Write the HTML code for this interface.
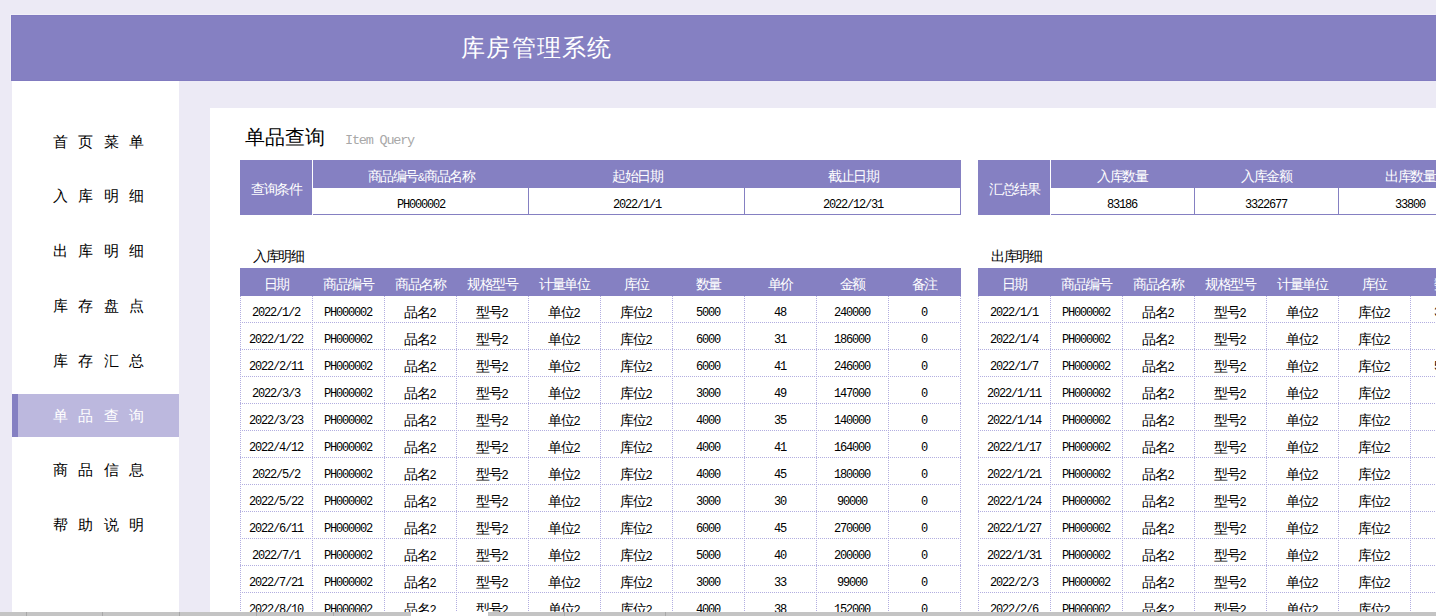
<!DOCTYPE html><html><head><meta charset="utf-8"><style>
*{margin:0;padding:0;box-sizing:border-box}
html,body{width:1436px;height:616px;overflow:hidden;background:#ecEAf5;font-family:"Liberation Sans",sans-serif;color:#000;position:relative}
.a{position:absolute}
.hdr{left:11px;top:15px;width:1425px;height:66px;background:#8580c2;border:1px solid #817bc0;border-right:0;box-shadow:-1px -1px 0 #f1f0f8}
.ttl{left:461px;top:35px;font-size:24px;line-height:26px;color:#fff;letter-spacing:1.3px;white-space:nowrap}
.side{left:12px;top:81px;width:167px;height:531px;background:#fff}
.mi{left:12px;width:167px;height:43px;font-size:15px;line-height:43px;letter-spacing:10.3px;padding-left:41px;white-space:nowrap}
.mi.on{background:#bcb8de;color:#fff}
.mi.on:before{content:"";position:absolute;left:0;top:0;width:6px;height:43px;background:#8580c2}
.main{left:210px;top:108px;width:1226px;height:504px;background:#fff}
.h1{left:245px;top:125px;font-size:19.5px;line-height:24px;white-space:nowrap}
.eng{left:345px;top:133px;font-family:"Liberation Mono",monospace;font-size:13.5px;letter-spacing:-1.2px;line-height:16px;color:#a8a8a8;white-space:nowrap}
.pc{background:#8580c2;color:#fff;font-size:12px;text-align:center;white-space:nowrap}
.t12{font-size:12px;white-space:nowrap;text-align:center}
.num{}
.c{font-size:13.5px;letter-spacing:-1.5px}
.n{font-family:"Liberation Mono",monospace;font-size:12px;letter-spacing:-1.2px}
.amp{font-size:11px;letter-spacing:-0.8px}
.hl{height:1px;background:repeating-linear-gradient(to right,#b2aee0 0 1px,transparent 1px 2px)}
.vl{width:1px;background:repeating-linear-gradient(to bottom,#b2aee0 0 1px,transparent 1px 2px)}
.sl{background:#8580c2}
.bar{left:0;top:612px;width:1436px;height:4px;background:#c4c4c4}
.bsep{top:612px;width:1px;height:4px;background:#a8a8a8}
</style></head><body>
<div class="a hdr"></div>
<div class="a ttl">库房管理系统</div>
<div class="a side"></div>
<div class="a mi" style="top:120px">首页菜单</div>
<div class="a mi" style="top:174px">入库明细</div>
<div class="a mi" style="top:229px">出库明细</div>
<div class="a mi" style="top:284px">库存盘点</div>
<div class="a mi" style="top:339px">库存汇总</div>
<div class="a mi on" style="top:394px">单品查询</div>
<div class="a mi" style="top:448px">商品信息</div>
<div class="a mi" style="top:503px">帮助说明</div>
<div class="a main"></div>
<div class="a h1">单品查询</div>
<div class="a eng">Item Query</div>
<div class="a pc" style="left:240px;top:160px;width:72px;height:55px;line-height:60px"><span class="c">查询条件</span></div>
<div class="a pc" style="left:313px;top:160px;width:648px;height:28px"></div>
<div class="a t12" style="left:313px;top:162px;width:216px;height:30px;line-height:30px;color:#fff"><span class="c">商品编号</span><span class="amp">&amp;</span><span class="c">商品名称</span></div>
<div class="a t12 num" style="left:313px;top:190px;width:216px;height:28px;line-height:28px;"><span class="n">PH000002</span></div>
<div class="a t12" style="left:529px;top:162px;width:216px;height:30px;line-height:30px;color:#fff"><span class="c">起始日期</span></div>
<div class="a t12 num" style="left:529px;top:190px;width:216px;height:28px;line-height:28px;"><span class="n">2022/1/1</span></div>
<div class="a t12" style="left:745px;top:162px;width:216px;height:30px;line-height:30px;color:#fff"><span class="c">截止日期</span></div>
<div class="a t12 num" style="left:745px;top:190px;width:216px;height:28px;line-height:28px;"><span class="n">2022/12/31</span></div>
<div class="a sl" style="left:528px;top:188px;width:1px;height:26px"></div>
<div class="a sl" style="left:744px;top:188px;width:1px;height:26px"></div>
<div class="a sl" style="left:960px;top:188px;width:1px;height:26px"></div>
<div class="a sl" style="left:313px;top:214px;width:648px;height:1px"></div>
<div class="a pc" style="left:978px;top:160px;width:72px;height:55px;line-height:60px"><span class="c">汇总结果</span></div>
<div class="a pc" style="left:1051px;top:160px;width:400px;height:28px"></div>
<div class="a t12" style="left:1050px;top:162px;width:144px;height:30px;line-height:30px;color:#fff"><span class="c">入库数量</span></div>
<div class="a t12 num" style="left:1050px;top:190px;width:144px;height:28px;line-height:28px;"><span class="n">83186</span></div>
<div class="a t12" style="left:1194px;top:162px;width:144px;height:30px;line-height:30px;color:#fff"><span class="c">入库金额</span></div>
<div class="a t12 num" style="left:1194px;top:190px;width:144px;height:28px;line-height:28px;"><span class="n">3322677</span></div>
<div class="a t12" style="left:1338px;top:162px;width:144px;height:30px;line-height:30px;color:#fff"><span class="c">出库数量</span></div>
<div class="a t12 num" style="left:1338px;top:190px;width:144px;height:28px;line-height:28px;"><span class="n">33800</span></div>
<div class="a sl" style="left:1194px;top:188px;width:1px;height:26px"></div>
<div class="a sl" style="left:1338px;top:188px;width:1px;height:26px"></div>
<div class="a sl" style="left:1051px;top:214px;width:400px;height:1px"></div>
<div class="a t12" style="left:253px;top:250px;height:14px;line-height:14px;text-align:left"><span class="c">入库明细</span></div>
<div class="a pc" style="left:240px;top:268px;width:721px;height:28px"></div>
<div class="a t12" style="left:240px;top:270px;width:72px;height:30px;line-height:30px;color:#fff"><span class="c">日期</span></div>
<div class="a t12" style="left:312px;top:270px;width:72px;height:30px;line-height:30px;color:#fff"><span class="c">商品编号</span></div>
<div class="a t12" style="left:384px;top:270px;width:72px;height:30px;line-height:30px;color:#fff"><span class="c">商品名称</span></div>
<div class="a t12" style="left:456px;top:270px;width:72px;height:30px;line-height:30px;color:#fff"><span class="c">规格型号</span></div>
<div class="a t12" style="left:528px;top:270px;width:72px;height:30px;line-height:30px;color:#fff"><span class="c">计量单位</span></div>
<div class="a t12" style="left:600px;top:270px;width:72px;height:30px;line-height:30px;color:#fff"><span class="c">库位</span></div>
<div class="a t12" style="left:672px;top:270px;width:72px;height:30px;line-height:30px;color:#fff"><span class="c">数量</span></div>
<div class="a t12" style="left:744px;top:270px;width:72px;height:30px;line-height:30px;color:#fff"><span class="c">单价</span></div>
<div class="a t12" style="left:816px;top:270px;width:72px;height:30px;line-height:30px;color:#fff"><span class="c">金额</span></div>
<div class="a t12" style="left:888px;top:270px;width:72px;height:30px;line-height:30px;color:#fff"><span class="c">备注</span></div>
<div class="a t12 num" style="left:240px;top:298px;width:72px;height:29px;line-height:29px;"><span class="n">2022/1/2</span></div>
<div class="a t12 num" style="left:312px;top:298px;width:72px;height:29px;line-height:29px;"><span class="n">PH000002</span></div>
<div class="a t12" style="left:384px;top:298px;width:72px;height:29px;line-height:29px;"><span class="c">品名</span><span class="n">2</span></div>
<div class="a t12" style="left:456px;top:298px;width:72px;height:29px;line-height:29px;"><span class="c">型号</span><span class="n">2</span></div>
<div class="a t12" style="left:528px;top:298px;width:72px;height:29px;line-height:29px;"><span class="c">单位</span><span class="n">2</span></div>
<div class="a t12" style="left:600px;top:298px;width:72px;height:29px;line-height:29px;"><span class="c">库位</span><span class="n">2</span></div>
<div class="a t12 num" style="left:672px;top:298px;width:72px;height:29px;line-height:29px;"><span class="n">5000</span></div>
<div class="a t12 num" style="left:744px;top:298px;width:72px;height:29px;line-height:29px;"><span class="n">48</span></div>
<div class="a t12 num" style="left:816px;top:298px;width:72px;height:29px;line-height:29px;"><span class="n">240000</span></div>
<div class="a t12 num" style="left:888px;top:298px;width:72px;height:29px;line-height:29px;"><span class="n">0</span></div>
<div class="a hl" style="left:240px;top:322px;width:721px"></div>
<div class="a t12 num" style="left:240px;top:325px;width:72px;height:29px;line-height:29px;"><span class="n">2022/1/22</span></div>
<div class="a t12 num" style="left:312px;top:325px;width:72px;height:29px;line-height:29px;"><span class="n">PH000002</span></div>
<div class="a t12" style="left:384px;top:325px;width:72px;height:29px;line-height:29px;"><span class="c">品名</span><span class="n">2</span></div>
<div class="a t12" style="left:456px;top:325px;width:72px;height:29px;line-height:29px;"><span class="c">型号</span><span class="n">2</span></div>
<div class="a t12" style="left:528px;top:325px;width:72px;height:29px;line-height:29px;"><span class="c">单位</span><span class="n">2</span></div>
<div class="a t12" style="left:600px;top:325px;width:72px;height:29px;line-height:29px;"><span class="c">库位</span><span class="n">2</span></div>
<div class="a t12 num" style="left:672px;top:325px;width:72px;height:29px;line-height:29px;"><span class="n">6000</span></div>
<div class="a t12 num" style="left:744px;top:325px;width:72px;height:29px;line-height:29px;"><span class="n">31</span></div>
<div class="a t12 num" style="left:816px;top:325px;width:72px;height:29px;line-height:29px;"><span class="n">186000</span></div>
<div class="a t12 num" style="left:888px;top:325px;width:72px;height:29px;line-height:29px;"><span class="n">0</span></div>
<div class="a hl" style="left:240px;top:349px;width:721px"></div>
<div class="a t12 num" style="left:240px;top:352px;width:72px;height:29px;line-height:29px;"><span class="n">2022/2/11</span></div>
<div class="a t12 num" style="left:312px;top:352px;width:72px;height:29px;line-height:29px;"><span class="n">PH000002</span></div>
<div class="a t12" style="left:384px;top:352px;width:72px;height:29px;line-height:29px;"><span class="c">品名</span><span class="n">2</span></div>
<div class="a t12" style="left:456px;top:352px;width:72px;height:29px;line-height:29px;"><span class="c">型号</span><span class="n">2</span></div>
<div class="a t12" style="left:528px;top:352px;width:72px;height:29px;line-height:29px;"><span class="c">单位</span><span class="n">2</span></div>
<div class="a t12" style="left:600px;top:352px;width:72px;height:29px;line-height:29px;"><span class="c">库位</span><span class="n">2</span></div>
<div class="a t12 num" style="left:672px;top:352px;width:72px;height:29px;line-height:29px;"><span class="n">6000</span></div>
<div class="a t12 num" style="left:744px;top:352px;width:72px;height:29px;line-height:29px;"><span class="n">41</span></div>
<div class="a t12 num" style="left:816px;top:352px;width:72px;height:29px;line-height:29px;"><span class="n">246000</span></div>
<div class="a t12 num" style="left:888px;top:352px;width:72px;height:29px;line-height:29px;"><span class="n">0</span></div>
<div class="a hl" style="left:240px;top:376px;width:721px"></div>
<div class="a t12 num" style="left:240px;top:379px;width:72px;height:29px;line-height:29px;"><span class="n">2022/3/3</span></div>
<div class="a t12 num" style="left:312px;top:379px;width:72px;height:29px;line-height:29px;"><span class="n">PH000002</span></div>
<div class="a t12" style="left:384px;top:379px;width:72px;height:29px;line-height:29px;"><span class="c">品名</span><span class="n">2</span></div>
<div class="a t12" style="left:456px;top:379px;width:72px;height:29px;line-height:29px;"><span class="c">型号</span><span class="n">2</span></div>
<div class="a t12" style="left:528px;top:379px;width:72px;height:29px;line-height:29px;"><span class="c">单位</span><span class="n">2</span></div>
<div class="a t12" style="left:600px;top:379px;width:72px;height:29px;line-height:29px;"><span class="c">库位</span><span class="n">2</span></div>
<div class="a t12 num" style="left:672px;top:379px;width:72px;height:29px;line-height:29px;"><span class="n">3000</span></div>
<div class="a t12 num" style="left:744px;top:379px;width:72px;height:29px;line-height:29px;"><span class="n">49</span></div>
<div class="a t12 num" style="left:816px;top:379px;width:72px;height:29px;line-height:29px;"><span class="n">147000</span></div>
<div class="a t12 num" style="left:888px;top:379px;width:72px;height:29px;line-height:29px;"><span class="n">0</span></div>
<div class="a hl" style="left:240px;top:403px;width:721px"></div>
<div class="a t12 num" style="left:240px;top:406px;width:72px;height:29px;line-height:29px;"><span class="n">2022/3/23</span></div>
<div class="a t12 num" style="left:312px;top:406px;width:72px;height:29px;line-height:29px;"><span class="n">PH000002</span></div>
<div class="a t12" style="left:384px;top:406px;width:72px;height:29px;line-height:29px;"><span class="c">品名</span><span class="n">2</span></div>
<div class="a t12" style="left:456px;top:406px;width:72px;height:29px;line-height:29px;"><span class="c">型号</span><span class="n">2</span></div>
<div class="a t12" style="left:528px;top:406px;width:72px;height:29px;line-height:29px;"><span class="c">单位</span><span class="n">2</span></div>
<div class="a t12" style="left:600px;top:406px;width:72px;height:29px;line-height:29px;"><span class="c">库位</span><span class="n">2</span></div>
<div class="a t12 num" style="left:672px;top:406px;width:72px;height:29px;line-height:29px;"><span class="n">4000</span></div>
<div class="a t12 num" style="left:744px;top:406px;width:72px;height:29px;line-height:29px;"><span class="n">35</span></div>
<div class="a t12 num" style="left:816px;top:406px;width:72px;height:29px;line-height:29px;"><span class="n">140000</span></div>
<div class="a t12 num" style="left:888px;top:406px;width:72px;height:29px;line-height:29px;"><span class="n">0</span></div>
<div class="a hl" style="left:240px;top:430px;width:721px"></div>
<div class="a t12 num" style="left:240px;top:433px;width:72px;height:29px;line-height:29px;"><span class="n">2022/4/12</span></div>
<div class="a t12 num" style="left:312px;top:433px;width:72px;height:29px;line-height:29px;"><span class="n">PH000002</span></div>
<div class="a t12" style="left:384px;top:433px;width:72px;height:29px;line-height:29px;"><span class="c">品名</span><span class="n">2</span></div>
<div class="a t12" style="left:456px;top:433px;width:72px;height:29px;line-height:29px;"><span class="c">型号</span><span class="n">2</span></div>
<div class="a t12" style="left:528px;top:433px;width:72px;height:29px;line-height:29px;"><span class="c">单位</span><span class="n">2</span></div>
<div class="a t12" style="left:600px;top:433px;width:72px;height:29px;line-height:29px;"><span class="c">库位</span><span class="n">2</span></div>
<div class="a t12 num" style="left:672px;top:433px;width:72px;height:29px;line-height:29px;"><span class="n">4000</span></div>
<div class="a t12 num" style="left:744px;top:433px;width:72px;height:29px;line-height:29px;"><span class="n">41</span></div>
<div class="a t12 num" style="left:816px;top:433px;width:72px;height:29px;line-height:29px;"><span class="n">164000</span></div>
<div class="a t12 num" style="left:888px;top:433px;width:72px;height:29px;line-height:29px;"><span class="n">0</span></div>
<div class="a hl" style="left:240px;top:457px;width:721px"></div>
<div class="a t12 num" style="left:240px;top:460px;width:72px;height:29px;line-height:29px;"><span class="n">2022/5/2</span></div>
<div class="a t12 num" style="left:312px;top:460px;width:72px;height:29px;line-height:29px;"><span class="n">PH000002</span></div>
<div class="a t12" style="left:384px;top:460px;width:72px;height:29px;line-height:29px;"><span class="c">品名</span><span class="n">2</span></div>
<div class="a t12" style="left:456px;top:460px;width:72px;height:29px;line-height:29px;"><span class="c">型号</span><span class="n">2</span></div>
<div class="a t12" style="left:528px;top:460px;width:72px;height:29px;line-height:29px;"><span class="c">单位</span><span class="n">2</span></div>
<div class="a t12" style="left:600px;top:460px;width:72px;height:29px;line-height:29px;"><span class="c">库位</span><span class="n">2</span></div>
<div class="a t12 num" style="left:672px;top:460px;width:72px;height:29px;line-height:29px;"><span class="n">4000</span></div>
<div class="a t12 num" style="left:744px;top:460px;width:72px;height:29px;line-height:29px;"><span class="n">45</span></div>
<div class="a t12 num" style="left:816px;top:460px;width:72px;height:29px;line-height:29px;"><span class="n">180000</span></div>
<div class="a t12 num" style="left:888px;top:460px;width:72px;height:29px;line-height:29px;"><span class="n">0</span></div>
<div class="a hl" style="left:240px;top:484px;width:721px"></div>
<div class="a t12 num" style="left:240px;top:487px;width:72px;height:29px;line-height:29px;"><span class="n">2022/5/22</span></div>
<div class="a t12 num" style="left:312px;top:487px;width:72px;height:29px;line-height:29px;"><span class="n">PH000002</span></div>
<div class="a t12" style="left:384px;top:487px;width:72px;height:29px;line-height:29px;"><span class="c">品名</span><span class="n">2</span></div>
<div class="a t12" style="left:456px;top:487px;width:72px;height:29px;line-height:29px;"><span class="c">型号</span><span class="n">2</span></div>
<div class="a t12" style="left:528px;top:487px;width:72px;height:29px;line-height:29px;"><span class="c">单位</span><span class="n">2</span></div>
<div class="a t12" style="left:600px;top:487px;width:72px;height:29px;line-height:29px;"><span class="c">库位</span><span class="n">2</span></div>
<div class="a t12 num" style="left:672px;top:487px;width:72px;height:29px;line-height:29px;"><span class="n">3000</span></div>
<div class="a t12 num" style="left:744px;top:487px;width:72px;height:29px;line-height:29px;"><span class="n">30</span></div>
<div class="a t12 num" style="left:816px;top:487px;width:72px;height:29px;line-height:29px;"><span class="n">90000</span></div>
<div class="a t12 num" style="left:888px;top:487px;width:72px;height:29px;line-height:29px;"><span class="n">0</span></div>
<div class="a hl" style="left:240px;top:511px;width:721px"></div>
<div class="a t12 num" style="left:240px;top:514px;width:72px;height:29px;line-height:29px;"><span class="n">2022/6/11</span></div>
<div class="a t12 num" style="left:312px;top:514px;width:72px;height:29px;line-height:29px;"><span class="n">PH000002</span></div>
<div class="a t12" style="left:384px;top:514px;width:72px;height:29px;line-height:29px;"><span class="c">品名</span><span class="n">2</span></div>
<div class="a t12" style="left:456px;top:514px;width:72px;height:29px;line-height:29px;"><span class="c">型号</span><span class="n">2</span></div>
<div class="a t12" style="left:528px;top:514px;width:72px;height:29px;line-height:29px;"><span class="c">单位</span><span class="n">2</span></div>
<div class="a t12" style="left:600px;top:514px;width:72px;height:29px;line-height:29px;"><span class="c">库位</span><span class="n">2</span></div>
<div class="a t12 num" style="left:672px;top:514px;width:72px;height:29px;line-height:29px;"><span class="n">6000</span></div>
<div class="a t12 num" style="left:744px;top:514px;width:72px;height:29px;line-height:29px;"><span class="n">45</span></div>
<div class="a t12 num" style="left:816px;top:514px;width:72px;height:29px;line-height:29px;"><span class="n">270000</span></div>
<div class="a t12 num" style="left:888px;top:514px;width:72px;height:29px;line-height:29px;"><span class="n">0</span></div>
<div class="a hl" style="left:240px;top:538px;width:721px"></div>
<div class="a t12 num" style="left:240px;top:541px;width:72px;height:29px;line-height:29px;"><span class="n">2022/7/1</span></div>
<div class="a t12 num" style="left:312px;top:541px;width:72px;height:29px;line-height:29px;"><span class="n">PH000002</span></div>
<div class="a t12" style="left:384px;top:541px;width:72px;height:29px;line-height:29px;"><span class="c">品名</span><span class="n">2</span></div>
<div class="a t12" style="left:456px;top:541px;width:72px;height:29px;line-height:29px;"><span class="c">型号</span><span class="n">2</span></div>
<div class="a t12" style="left:528px;top:541px;width:72px;height:29px;line-height:29px;"><span class="c">单位</span><span class="n">2</span></div>
<div class="a t12" style="left:600px;top:541px;width:72px;height:29px;line-height:29px;"><span class="c">库位</span><span class="n">2</span></div>
<div class="a t12 num" style="left:672px;top:541px;width:72px;height:29px;line-height:29px;"><span class="n">5000</span></div>
<div class="a t12 num" style="left:744px;top:541px;width:72px;height:29px;line-height:29px;"><span class="n">40</span></div>
<div class="a t12 num" style="left:816px;top:541px;width:72px;height:29px;line-height:29px;"><span class="n">200000</span></div>
<div class="a t12 num" style="left:888px;top:541px;width:72px;height:29px;line-height:29px;"><span class="n">0</span></div>
<div class="a hl" style="left:240px;top:565px;width:721px"></div>
<div class="a t12 num" style="left:240px;top:568px;width:72px;height:29px;line-height:29px;"><span class="n">2022/7/21</span></div>
<div class="a t12 num" style="left:312px;top:568px;width:72px;height:29px;line-height:29px;"><span class="n">PH000002</span></div>
<div class="a t12" style="left:384px;top:568px;width:72px;height:29px;line-height:29px;"><span class="c">品名</span><span class="n">2</span></div>
<div class="a t12" style="left:456px;top:568px;width:72px;height:29px;line-height:29px;"><span class="c">型号</span><span class="n">2</span></div>
<div class="a t12" style="left:528px;top:568px;width:72px;height:29px;line-height:29px;"><span class="c">单位</span><span class="n">2</span></div>
<div class="a t12" style="left:600px;top:568px;width:72px;height:29px;line-height:29px;"><span class="c">库位</span><span class="n">2</span></div>
<div class="a t12 num" style="left:672px;top:568px;width:72px;height:29px;line-height:29px;"><span class="n">3000</span></div>
<div class="a t12 num" style="left:744px;top:568px;width:72px;height:29px;line-height:29px;"><span class="n">33</span></div>
<div class="a t12 num" style="left:816px;top:568px;width:72px;height:29px;line-height:29px;"><span class="n">99000</span></div>
<div class="a t12 num" style="left:888px;top:568px;width:72px;height:29px;line-height:29px;"><span class="n">0</span></div>
<div class="a hl" style="left:240px;top:592px;width:721px"></div>
<div class="a t12 num" style="left:240px;top:595px;width:72px;height:29px;line-height:29px;"><span class="n">2022/8/10</span></div>
<div class="a t12 num" style="left:312px;top:595px;width:72px;height:29px;line-height:29px;"><span class="n">PH000002</span></div>
<div class="a t12" style="left:384px;top:595px;width:72px;height:29px;line-height:29px;"><span class="c">品名</span><span class="n">2</span></div>
<div class="a t12" style="left:456px;top:595px;width:72px;height:29px;line-height:29px;"><span class="c">型号</span><span class="n">2</span></div>
<div class="a t12" style="left:528px;top:595px;width:72px;height:29px;line-height:29px;"><span class="c">单位</span><span class="n">2</span></div>
<div class="a t12" style="left:600px;top:595px;width:72px;height:29px;line-height:29px;"><span class="c">库位</span><span class="n">2</span></div>
<div class="a t12 num" style="left:672px;top:595px;width:72px;height:29px;line-height:29px;"><span class="n">4000</span></div>
<div class="a t12 num" style="left:744px;top:595px;width:72px;height:29px;line-height:29px;"><span class="n">38</span></div>
<div class="a t12 num" style="left:816px;top:595px;width:72px;height:29px;line-height:29px;"><span class="n">152000</span></div>
<div class="a t12 num" style="left:888px;top:595px;width:72px;height:29px;line-height:29px;"><span class="n">0</span></div>
<div class="a hl" style="left:240px;top:619px;width:721px"></div>
<div class="a vl" style="left:240px;top:296px;height:320px"></div>
<div class="a vl" style="left:312px;top:296px;height:320px"></div>
<div class="a vl" style="left:384px;top:296px;height:320px"></div>
<div class="a vl" style="left:456px;top:296px;height:320px"></div>
<div class="a vl" style="left:528px;top:296px;height:320px"></div>
<div class="a vl" style="left:600px;top:296px;height:320px"></div>
<div class="a vl" style="left:672px;top:296px;height:320px"></div>
<div class="a vl" style="left:744px;top:296px;height:320px"></div>
<div class="a vl" style="left:816px;top:296px;height:320px"></div>
<div class="a vl" style="left:888px;top:296px;height:320px"></div>
<div class="a vl" style="left:960px;top:296px;height:320px"></div>
<div class="a t12" style="left:991px;top:250px;height:14px;line-height:14px;text-align:left"><span class="c">出库明细</span></div>
<div class="a pc" style="left:978px;top:268px;width:504px;height:28px"></div>
<div class="a t12" style="left:978px;top:270px;width:72px;height:30px;line-height:30px;color:#fff"><span class="c">日期</span></div>
<div class="a t12" style="left:1050px;top:270px;width:72px;height:30px;line-height:30px;color:#fff"><span class="c">商品编号</span></div>
<div class="a t12" style="left:1122px;top:270px;width:72px;height:30px;line-height:30px;color:#fff"><span class="c">商品名称</span></div>
<div class="a t12" style="left:1194px;top:270px;width:72px;height:30px;line-height:30px;color:#fff"><span class="c">规格型号</span></div>
<div class="a t12" style="left:1266px;top:270px;width:72px;height:30px;line-height:30px;color:#fff"><span class="c">计量单位</span></div>
<div class="a t12" style="left:1338px;top:270px;width:72px;height:30px;line-height:30px;color:#fff"><span class="c">库位</span></div>
<div class="a t12" style="left:1410px;top:270px;width:72px;height:30px;line-height:30px;color:#fff"><span class="c">数量</span></div>
<div class="a t12 num" style="left:978px;top:298px;width:72px;height:29px;line-height:29px;"><span class="n">2022/1/1</span></div>
<div class="a t12 num" style="left:1050px;top:298px;width:72px;height:29px;line-height:29px;"><span class="n">PH000002</span></div>
<div class="a t12" style="left:1122px;top:298px;width:72px;height:29px;line-height:29px;"><span class="c">品名</span><span class="n">2</span></div>
<div class="a t12" style="left:1194px;top:298px;width:72px;height:29px;line-height:29px;"><span class="c">型号</span><span class="n">2</span></div>
<div class="a t12" style="left:1266px;top:298px;width:72px;height:29px;line-height:29px;"><span class="c">单位</span><span class="n">2</span></div>
<div class="a t12" style="left:1338px;top:298px;width:72px;height:29px;line-height:29px;"><span class="c">库位</span><span class="n">2</span></div>
<div class="a t12 num" style="left:1410px;top:298px;width:72px;height:29px;line-height:29px;"><span class="n">3000</span></div>
<div class="a hl" style="left:978px;top:322px;width:504px"></div>
<div class="a t12 num" style="left:978px;top:325px;width:72px;height:29px;line-height:29px;"><span class="n">2022/1/4</span></div>
<div class="a t12 num" style="left:1050px;top:325px;width:72px;height:29px;line-height:29px;"><span class="n">PH000002</span></div>
<div class="a t12" style="left:1122px;top:325px;width:72px;height:29px;line-height:29px;"><span class="c">品名</span><span class="n">2</span></div>
<div class="a t12" style="left:1194px;top:325px;width:72px;height:29px;line-height:29px;"><span class="c">型号</span><span class="n">2</span></div>
<div class="a t12" style="left:1266px;top:325px;width:72px;height:29px;line-height:29px;"><span class="c">单位</span><span class="n">2</span></div>
<div class="a t12" style="left:1338px;top:325px;width:72px;height:29px;line-height:29px;"><span class="c">库位</span><span class="n">2</span></div>
<div class="a t12 num" style="left:1410px;top:325px;width:72px;height:29px;line-height:29px;"><span class="n">900</span></div>
<div class="a hl" style="left:978px;top:349px;width:504px"></div>
<div class="a t12 num" style="left:978px;top:352px;width:72px;height:29px;line-height:29px;"><span class="n">2022/1/7</span></div>
<div class="a t12 num" style="left:1050px;top:352px;width:72px;height:29px;line-height:29px;"><span class="n">PH000002</span></div>
<div class="a t12" style="left:1122px;top:352px;width:72px;height:29px;line-height:29px;"><span class="c">品名</span><span class="n">2</span></div>
<div class="a t12" style="left:1194px;top:352px;width:72px;height:29px;line-height:29px;"><span class="c">型号</span><span class="n">2</span></div>
<div class="a t12" style="left:1266px;top:352px;width:72px;height:29px;line-height:29px;"><span class="c">单位</span><span class="n">2</span></div>
<div class="a t12" style="left:1338px;top:352px;width:72px;height:29px;line-height:29px;"><span class="c">库位</span><span class="n">2</span></div>
<div class="a t12 num" style="left:1410px;top:352px;width:72px;height:29px;line-height:29px;"><span class="n">5000</span></div>
<div class="a hl" style="left:978px;top:376px;width:504px"></div>
<div class="a t12 num" style="left:978px;top:379px;width:72px;height:29px;line-height:29px;"><span class="n">2022/1/11</span></div>
<div class="a t12 num" style="left:1050px;top:379px;width:72px;height:29px;line-height:29px;"><span class="n">PH000002</span></div>
<div class="a t12" style="left:1122px;top:379px;width:72px;height:29px;line-height:29px;"><span class="c">品名</span><span class="n">2</span></div>
<div class="a t12" style="left:1194px;top:379px;width:72px;height:29px;line-height:29px;"><span class="c">型号</span><span class="n">2</span></div>
<div class="a t12" style="left:1266px;top:379px;width:72px;height:29px;line-height:29px;"><span class="c">单位</span><span class="n">2</span></div>
<div class="a t12" style="left:1338px;top:379px;width:72px;height:29px;line-height:29px;"><span class="c">库位</span><span class="n">2</span></div>
<div class="a t12 num" style="left:1410px;top:379px;width:72px;height:29px;line-height:29px;"><span class="n">900</span></div>
<div class="a hl" style="left:978px;top:403px;width:504px"></div>
<div class="a t12 num" style="left:978px;top:406px;width:72px;height:29px;line-height:29px;"><span class="n">2022/1/14</span></div>
<div class="a t12 num" style="left:1050px;top:406px;width:72px;height:29px;line-height:29px;"><span class="n">PH000002</span></div>
<div class="a t12" style="left:1122px;top:406px;width:72px;height:29px;line-height:29px;"><span class="c">品名</span><span class="n">2</span></div>
<div class="a t12" style="left:1194px;top:406px;width:72px;height:29px;line-height:29px;"><span class="c">型号</span><span class="n">2</span></div>
<div class="a t12" style="left:1266px;top:406px;width:72px;height:29px;line-height:29px;"><span class="c">单位</span><span class="n">2</span></div>
<div class="a t12" style="left:1338px;top:406px;width:72px;height:29px;line-height:29px;"><span class="c">库位</span><span class="n">2</span></div>
<div class="a t12 num" style="left:1410px;top:406px;width:72px;height:29px;line-height:29px;"><span class="n">900</span></div>
<div class="a hl" style="left:978px;top:430px;width:504px"></div>
<div class="a t12 num" style="left:978px;top:433px;width:72px;height:29px;line-height:29px;"><span class="n">2022/1/17</span></div>
<div class="a t12 num" style="left:1050px;top:433px;width:72px;height:29px;line-height:29px;"><span class="n">PH000002</span></div>
<div class="a t12" style="left:1122px;top:433px;width:72px;height:29px;line-height:29px;"><span class="c">品名</span><span class="n">2</span></div>
<div class="a t12" style="left:1194px;top:433px;width:72px;height:29px;line-height:29px;"><span class="c">型号</span><span class="n">2</span></div>
<div class="a t12" style="left:1266px;top:433px;width:72px;height:29px;line-height:29px;"><span class="c">单位</span><span class="n">2</span></div>
<div class="a t12" style="left:1338px;top:433px;width:72px;height:29px;line-height:29px;"><span class="c">库位</span><span class="n">2</span></div>
<div class="a t12 num" style="left:1410px;top:433px;width:72px;height:29px;line-height:29px;"><span class="n">900</span></div>
<div class="a hl" style="left:978px;top:457px;width:504px"></div>
<div class="a t12 num" style="left:978px;top:460px;width:72px;height:29px;line-height:29px;"><span class="n">2022/1/21</span></div>
<div class="a t12 num" style="left:1050px;top:460px;width:72px;height:29px;line-height:29px;"><span class="n">PH000002</span></div>
<div class="a t12" style="left:1122px;top:460px;width:72px;height:29px;line-height:29px;"><span class="c">品名</span><span class="n">2</span></div>
<div class="a t12" style="left:1194px;top:460px;width:72px;height:29px;line-height:29px;"><span class="c">型号</span><span class="n">2</span></div>
<div class="a t12" style="left:1266px;top:460px;width:72px;height:29px;line-height:29px;"><span class="c">单位</span><span class="n">2</span></div>
<div class="a t12" style="left:1338px;top:460px;width:72px;height:29px;line-height:29px;"><span class="c">库位</span><span class="n">2</span></div>
<div class="a t12 num" style="left:1410px;top:460px;width:72px;height:29px;line-height:29px;"><span class="n">900</span></div>
<div class="a hl" style="left:978px;top:484px;width:504px"></div>
<div class="a t12 num" style="left:978px;top:487px;width:72px;height:29px;line-height:29px;"><span class="n">2022/1/24</span></div>
<div class="a t12 num" style="left:1050px;top:487px;width:72px;height:29px;line-height:29px;"><span class="n">PH000002</span></div>
<div class="a t12" style="left:1122px;top:487px;width:72px;height:29px;line-height:29px;"><span class="c">品名</span><span class="n">2</span></div>
<div class="a t12" style="left:1194px;top:487px;width:72px;height:29px;line-height:29px;"><span class="c">型号</span><span class="n">2</span></div>
<div class="a t12" style="left:1266px;top:487px;width:72px;height:29px;line-height:29px;"><span class="c">单位</span><span class="n">2</span></div>
<div class="a t12" style="left:1338px;top:487px;width:72px;height:29px;line-height:29px;"><span class="c">库位</span><span class="n">2</span></div>
<div class="a t12 num" style="left:1410px;top:487px;width:72px;height:29px;line-height:29px;"><span class="n">900</span></div>
<div class="a hl" style="left:978px;top:511px;width:504px"></div>
<div class="a t12 num" style="left:978px;top:514px;width:72px;height:29px;line-height:29px;"><span class="n">2022/1/27</span></div>
<div class="a t12 num" style="left:1050px;top:514px;width:72px;height:29px;line-height:29px;"><span class="n">PH000002</span></div>
<div class="a t12" style="left:1122px;top:514px;width:72px;height:29px;line-height:29px;"><span class="c">品名</span><span class="n">2</span></div>
<div class="a t12" style="left:1194px;top:514px;width:72px;height:29px;line-height:29px;"><span class="c">型号</span><span class="n">2</span></div>
<div class="a t12" style="left:1266px;top:514px;width:72px;height:29px;line-height:29px;"><span class="c">单位</span><span class="n">2</span></div>
<div class="a t12" style="left:1338px;top:514px;width:72px;height:29px;line-height:29px;"><span class="c">库位</span><span class="n">2</span></div>
<div class="a t12 num" style="left:1410px;top:514px;width:72px;height:29px;line-height:29px;"><span class="n">900</span></div>
<div class="a hl" style="left:978px;top:538px;width:504px"></div>
<div class="a t12 num" style="left:978px;top:541px;width:72px;height:29px;line-height:29px;"><span class="n">2022/1/31</span></div>
<div class="a t12 num" style="left:1050px;top:541px;width:72px;height:29px;line-height:29px;"><span class="n">PH000002</span></div>
<div class="a t12" style="left:1122px;top:541px;width:72px;height:29px;line-height:29px;"><span class="c">品名</span><span class="n">2</span></div>
<div class="a t12" style="left:1194px;top:541px;width:72px;height:29px;line-height:29px;"><span class="c">型号</span><span class="n">2</span></div>
<div class="a t12" style="left:1266px;top:541px;width:72px;height:29px;line-height:29px;"><span class="c">单位</span><span class="n">2</span></div>
<div class="a t12" style="left:1338px;top:541px;width:72px;height:29px;line-height:29px;"><span class="c">库位</span><span class="n">2</span></div>
<div class="a t12 num" style="left:1410px;top:541px;width:72px;height:29px;line-height:29px;"><span class="n">900</span></div>
<div class="a hl" style="left:978px;top:565px;width:504px"></div>
<div class="a t12 num" style="left:978px;top:568px;width:72px;height:29px;line-height:29px;"><span class="n">2022/2/3</span></div>
<div class="a t12 num" style="left:1050px;top:568px;width:72px;height:29px;line-height:29px;"><span class="n">PH000002</span></div>
<div class="a t12" style="left:1122px;top:568px;width:72px;height:29px;line-height:29px;"><span class="c">品名</span><span class="n">2</span></div>
<div class="a t12" style="left:1194px;top:568px;width:72px;height:29px;line-height:29px;"><span class="c">型号</span><span class="n">2</span></div>
<div class="a t12" style="left:1266px;top:568px;width:72px;height:29px;line-height:29px;"><span class="c">单位</span><span class="n">2</span></div>
<div class="a t12" style="left:1338px;top:568px;width:72px;height:29px;line-height:29px;"><span class="c">库位</span><span class="n">2</span></div>
<div class="a t12 num" style="left:1410px;top:568px;width:72px;height:29px;line-height:29px;"><span class="n">900</span></div>
<div class="a hl" style="left:978px;top:592px;width:504px"></div>
<div class="a t12 num" style="left:978px;top:595px;width:72px;height:29px;line-height:29px;"><span class="n">2022/2/6</span></div>
<div class="a t12 num" style="left:1050px;top:595px;width:72px;height:29px;line-height:29px;"><span class="n">PH000002</span></div>
<div class="a t12" style="left:1122px;top:595px;width:72px;height:29px;line-height:29px;"><span class="c">品名</span><span class="n">2</span></div>
<div class="a t12" style="left:1194px;top:595px;width:72px;height:29px;line-height:29px;"><span class="c">型号</span><span class="n">2</span></div>
<div class="a t12" style="left:1266px;top:595px;width:72px;height:29px;line-height:29px;"><span class="c">单位</span><span class="n">2</span></div>
<div class="a t12" style="left:1338px;top:595px;width:72px;height:29px;line-height:29px;"><span class="c">库位</span><span class="n">2</span></div>
<div class="a t12 num" style="left:1410px;top:595px;width:72px;height:29px;line-height:29px;"><span class="n">900</span></div>
<div class="a hl" style="left:978px;top:619px;width:504px"></div>
<div class="a vl" style="left:978px;top:296px;height:320px"></div>
<div class="a vl" style="left:1050px;top:296px;height:320px"></div>
<div class="a vl" style="left:1122px;top:296px;height:320px"></div>
<div class="a vl" style="left:1194px;top:296px;height:320px"></div>
<div class="a vl" style="left:1266px;top:296px;height:320px"></div>
<div class="a vl" style="left:1338px;top:296px;height:320px"></div>
<div class="a vl" style="left:1410px;top:296px;height:320px"></div>
<div class="a vl" style="left:1482px;top:296px;height:320px"></div>
<div class="a bar"></div>
<div class="a bsep" style="left:26px"></div>
<div class="a bsep" style="left:102px"></div>
<div class="a bsep" style="left:179px"></div>
<div class="a bsep" style="left:256px"></div>
<div class="a bsep" style="left:333px"></div>
<div class="a bsep" style="left:564px"></div>
<div class="a bsep" style="left:665px"></div>
<div class="a" style="left:411px;top:612px;width:77px;height:4px;background:#fff"></div>
</body></html>
